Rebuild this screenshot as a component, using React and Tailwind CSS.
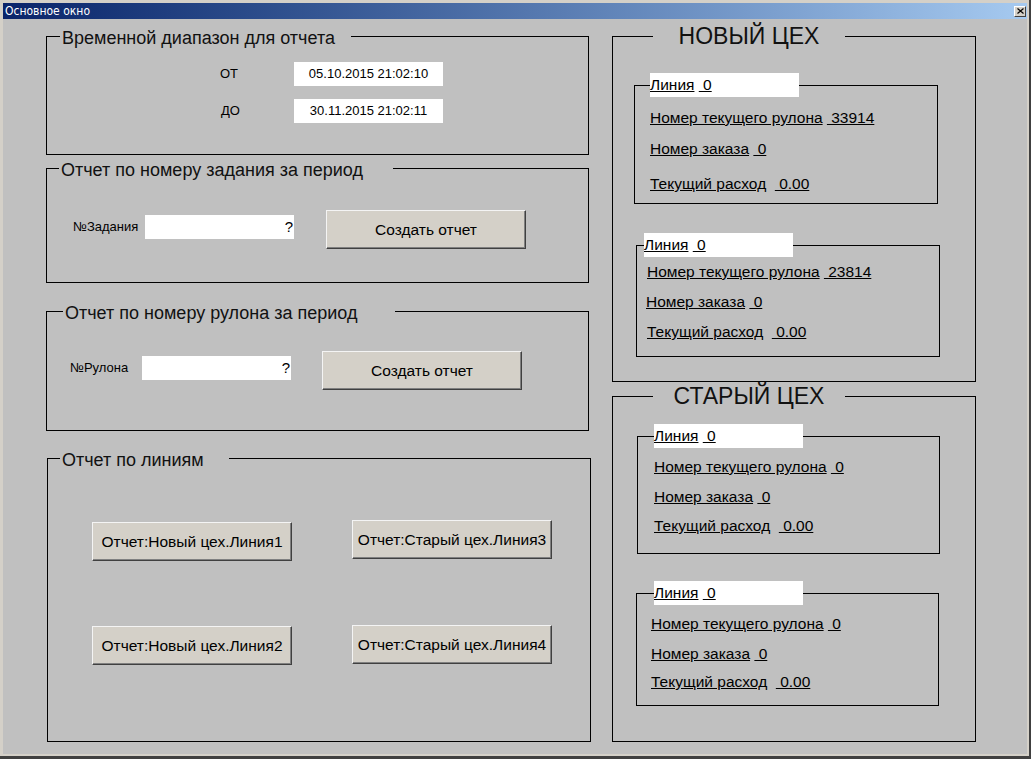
import React from 'react'

const font = "font-['Liberation_Sans',Arial,sans-serif]"

const btn =
  'w-[200px] h-[39px] bg-[#d4d0c8] border border-t-[#f4f4f4] border-l-[#f4f4f4] border-r-[#404040] border-b-[#404040] shadow-[inset_-1px_-1px_0_#808080] text-[15.5px] text-black'

const field = 'w-[149px] h-[24px] bg-white text-[13px] text-black flex items-center justify-center'

function Group({ title, legendCls, className, children }) {
  return (
    <fieldset className={`border border-black ${className}`}>
      <legend className={`h-[20px] pl-[2px] text-[18px] leading-[25px] text-[#111] whitespace-nowrap ${legendCls}`}>
        {title}
      </legend>
      {children}
    </fieldset>
  )
}

function Row({ label, sep, value, className }) {
  return (
    <div className={`h-[18px] leading-[18px] text-[15.5px] whitespace-pre ${className}`}>
      <u>{label}</u>
      {sep}
      <u>{value}</u>
    </div>
  )
}

// Блок линии: белая подпись на рамке + три строки
function LineBox({ box, legend, rows, r2, r3, roll }) {
  return (
    <fieldset className={`border border-black ${box}`}>
      <legend className={`w-[149px] h-[24px] bg-white text-[15.5px] leading-[24px] whitespace-pre ${legend}`}>
        <u>Линия</u> <u> 0</u>
      </legend>
      <div className={`flex flex-col ${rows}`}>
        <Row label="Номер текущего рулона" sep=" " value={` ${roll}`} />
        <Row label="Номер заказа" sep=" " value=" 0" className={r2} />
        <Row label="Текущий расход" sep="  " value=" 0.00" className={r3} />
      </div>
    </fieldset>
  )
}

function Shop({ title, className, children }) {
  return (
    <fieldset className={`border border-black w-[364px] h-[359px] ${className}`}>
      <legend className="ml-[40px] w-[192px] h-[26px]">
        <span className="block text-center text-[23px] leading-[26px] text-[#111]">{title}</span>
      </legend>
      {children}
    </fieldset>
  )
}

export default function App() {
  return (
    <div
      className={`${font} w-[1031px] h-[759px] flex flex-col bg-[#d4d0c8] pl-[3px] pt-[3px] pr-[2px] pb-[2px] border-r-2 border-b-[3px] border-r-[#404040] border-b-[#404040] overflow-hidden`}
    >
      {/* Заголовок окна */}
      <div className="h-[16px] flex items-center justify-between bg-linear-to-r from-[#0a246a] to-[#a6caf0] pl-[2px] pr-[1px]">
        <span className="text-white text-[12px] leading-[16px] font-['DejaVu_Sans_Condensed','Liberation_Sans',sans-serif]">
          Основное окно
        </span>
        <div className="w-[12px] h-[11px] bg-[#d4d0c8] border border-t-white border-l-white border-r-[#404040] border-b-[#404040] flex items-center justify-center">
          <svg width="7" height="6" viewBox="0 0 7 6">
            <path d="M0.5 0.5 L6.5 5.5 M6.5 0.5 L0.5 5.5" stroke="#000" strokeWidth="1.2" fill="none" />
          </svg>
        </div>
      </div>

      <div className="flex-1 bg-[#c0c0c0] flex items-start pl-[43px] pt-[4px]">
        {/* Левая колонка */}
        <div className="w-[543px] mt-[3px] flex flex-col">
          <Group title="Временной диапазон для отчета" legendCls="ml-[13px] w-[291px]" className="w-[543px] h-[129px]">
            <div className="ml-[173px] mt-[16px] grid grid-cols-[74px_149px] gap-y-[13px] items-center text-[13px]">
              <span>ОТ</span>
              <div className={field}>05.10.2015 21:02:10</div>
              <span className="pl-[1px]">ДО</span>
              <div className={field}>30.11.2015 21:02:11</div>
            </div>
          </Group>

          <Group title="Отчет по номеру задания за период" legendCls="ml-[12px] w-[334px]" className="w-[543px] h-[125px] mt-[3px]">
            <div className="mt-[32px] pl-[26px] flex items-start">
              <span className="w-[72px] h-[24px] mt-[5px] flex items-center text-[13px]">№Задания</span>
              <div className="w-[149px] h-[24px] mt-[5px] bg-white flex items-center justify-end pr-[1px] text-[15px]">?</div>
              <button className={`${btn} ml-[32px]`}>Создать отчет</button>
            </div>
          </Group>

          <Group title="Отчет по номеру рулона за период" legendCls="ml-[16px] w-[332px]" className="w-[543px] h-[130px] mt-[18px]">
            <div className="mt-[30px] pl-[23px] flex items-start">
              <span className="w-[72px] h-[24px] mt-[5px] flex items-center text-[13px]">№Рулона</span>
              <div className="w-[149px] h-[24px] mt-[5px] bg-white flex items-center justify-end pr-[1px] text-[15px]">?</div>
              <button className={`${btn} ml-[31px]`}>Создать отчет</button>
            </div>
          </Group>

          <Group title="Отчет по линиям" legendCls="ml-[12px] w-[169px]" className="w-[544px] h-[294px] mt-[17px] ml-[1px]">
            <div className="mt-[52px] pl-[44px] grid grid-cols-[200px_200px] gap-x-[60px] gap-y-[64px] items-start">
              <button className={`${btn} mt-[2px]`}>Отчет:Новый цех.Линия1</button>
              <button className={btn}>Отчет:Старый цех.Линия3</button>
              <button className={`${btn} mt-[1px]`}>Отчет:Новый цех.Линия2</button>
              <button className={btn}>Отчет:Старый цех.Линия4</button>
            </div>
          </Group>
        </div>

        {/* Правая колонка */}
        <div className="ml-[23px] flex flex-col">
          <Shop title="НОВЫЙ ЦЕХ">
            <LineBox
              box="ml-[21px] mt-[24px] w-[304px] h-[131px]"
              legend="ml-[15px]"
              rows="pl-[15px] pt-[12px]"
              r2="mt-[13px]"
              r3="mt-[17px]"
              roll="33914"
            />
            <LineBox
              box="ml-[23px] mt-[29px] w-[304px] h-[124px]"
              legend="ml-[7px]"
              rows="pl-[10px] pt-[6px]"
              r2="mt-[12px] -ml-[1px]"
              r3="mt-[12px]"
              roll="23814"
            />
          </Shop>
          <Shop title="СТАРЫЙ ЦЕХ" className="mt-[1px]">
            <LineBox
              box="ml-[24px] mt-[15px] w-[303px] h-[130px]"
              legend="ml-[16px]"
              rows="pl-[16px] pt-[10px]"
              r2="mt-[12px]"
              r3="mt-[11px]"
              roll="0"
            />
            <LineBox
              box="ml-[23px] mt-[27px] w-[303px] h-[125px]"
              legend="ml-[17px]"
              rows="pl-[14px] pt-[10px]"
              r2="mt-[12px]"
              r3="mt-[10px]"
              roll="0"
            />
          </Shop>
        </div>
      </div>
    </div>
  )
}
